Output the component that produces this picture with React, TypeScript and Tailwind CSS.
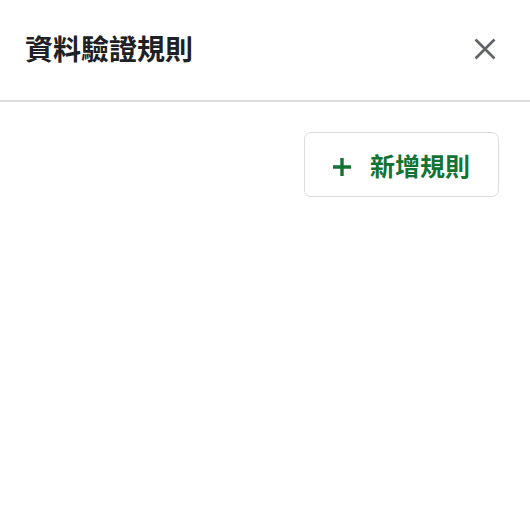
import React from "react";

function CloseIcon() {
  return (
    <svg width="22" height="22" viewBox="0 0 22 22" fill="none">
      <path d="M1.5 1.5L20.5 20.5M20.5 1.5L1.5 20.5" stroke="#5f6368" strokeWidth="2.6" />
    </svg>
  );
}

function PlusIcon() {
  return (
    <svg width="18" height="18" viewBox="0 0 18 18" fill="none">
      <path d="M9 0V18M0 9H18" stroke="#137333" strokeWidth="3.4" />
    </svg>
  );
}

export default function App() {
  return (
    <div
      className="w-[530px] h-[514px] bg-white"
      style={{ fontFamily: '"Noto Sans CJK TC", "Noto Sans", sans-serif' }}
    >
      {/* Header */}
      <div className="h-[102px] flex items-center justify-between pl-[25px] pr-[34px] border-b-2 border-[#dadce0]">
        <h1 className="text-[28px] leading-none font-bold text-[#202124] -mt-[4px]">資料驗證規則</h1>
        <button className="-mt-[2px]">
          <CloseIcon />
        </button>
      </div>

      {/* Actions */}
      <div className="flex justify-end pt-[30px] pr-[31px]">
        <button className="h-[65px] w-[195px] flex items-center gap-[19px] pl-[28px] border border-[#dadce0] rounded-[7px] bg-white">
          <span className="mt-[4px]">
            <PlusIcon />
          </span>
          <span className="text-[25px] leading-none font-bold text-[#137333] mt-[2px]">新增規則</span>
        </button>
      </div>
    </div>
  );
}
